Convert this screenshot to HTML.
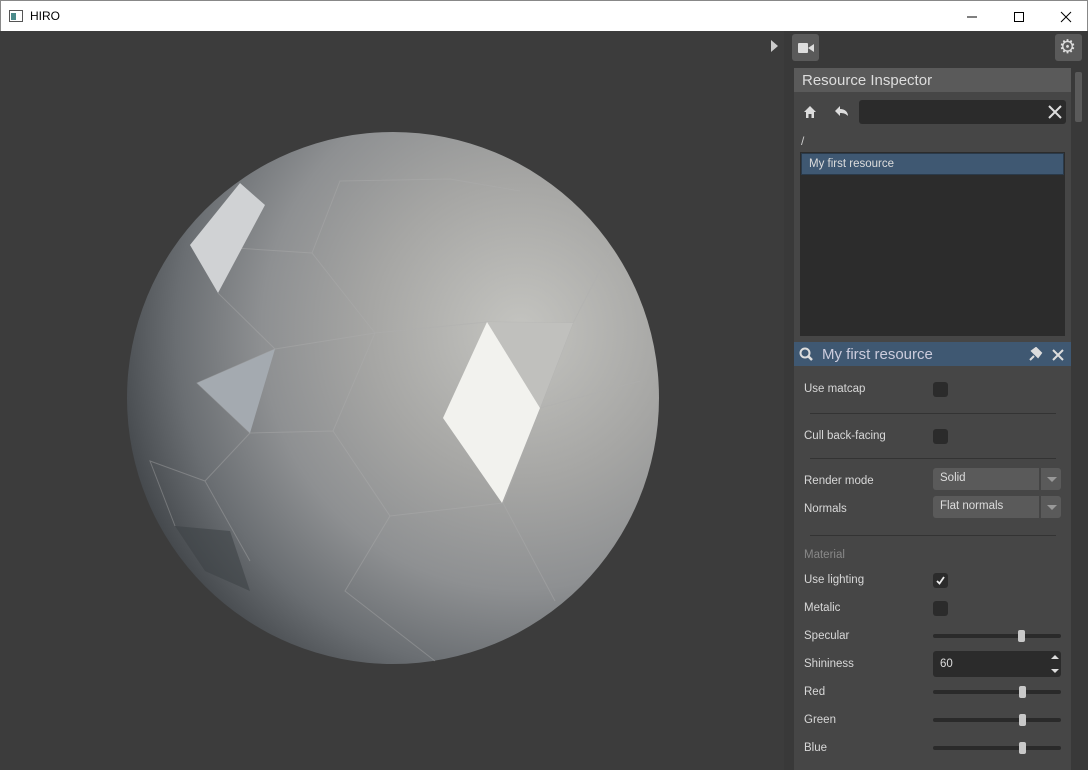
<!DOCTYPE html>
<html><head><style>
*{margin:0;padding:0;box-sizing:border-box}
body{width:1088px;height:770px;overflow:hidden;background:#3c3c3c;font-family:"Liberation Sans",sans-serif;position:relative}
.tb{position:absolute;left:0;top:0;width:1088px;height:31px;background:#fff;border:1px solid #888;border-bottom:none}
.tb span{position:absolute;left:29px;top:8px;font-size:12px;color:#000}
.p{position:absolute}
.lbl{position:absolute;left:804px;font-size:11.5px;color:#d8d8d8}
.cb{position:absolute;left:933px;width:15px;height:15px;background:#2b2b2b;border-radius:3px}
.sl{position:absolute;left:933px;width:128px;height:4px;background:#2a2a2a;border-radius:2px}
.th{position:absolute;width:7px;height:12px;background:#c8c8c8;border-radius:2px;top:-4px}
.dd{position:absolute;left:933px;width:128px;height:22px;background:#5a5a5a;border-radius:3px;font-size:11.5px;color:#ddd;padding:4px 7px}
.dd i{position:absolute;right:0;top:0;width:22px;height:22px;border-left:2px solid #454545}
.dd i:after{content:"";position:absolute;left:6px;top:9px;border:5px solid transparent;border-top:5px solid #999}
.sep{position:absolute;left:810px;width:246px;height:1px;background:#333}
</style></head><body>
<div class="tb"><svg class="p" style="left:8px;top:9px" width="14" height="12"><rect x="0.5" y="0.5" width="13" height="11" fill="#fff" stroke="#555"/><rect x="2" y="3" width="5" height="7" fill="#4a8a8a"/></svg><span>HIRO</span>
<svg class="p" style="left:966px;top:10px" width="110" height="12"><line x1="0" y1="6" x2="10" y2="6" stroke="#000"/><rect x="47.5" y="1.5" width="9" height="9" fill="none" stroke="#000"/><path d="M94 1L104 11M104 1L94 11" stroke="#000"/></svg></div>

<svg class="p" style="left:0;top:31px" width="784" height="739">
<defs><radialGradient id="g" gradientUnits="userSpaceOnUse" cx="520" cy="300" r="430"><stop offset="0" stop-color="#c4c4c0"/><stop offset="0.35" stop-color="#a6a6a4"/><stop offset="0.6" stop-color="#8e9092"/><stop offset="0.8" stop-color="#6a6e72"/><stop offset="1" stop-color="#3a3e42"/></radialGradient></defs>
<ellipse cx="393" cy="367" rx="266" ry="266" fill="url(#g)"/>
<g fill="none" stroke="#b0b0ae" stroke-width="1" opacity="0.4">
<path d="M190 214L312 222L375 302L487 291L573 292L610 220M312 222L340 150L450 148L520 160M375 302L333 400L390 485L503 472L540 377L573 292M333 400L250 402L197 352L275 318L375 302M250 402L205 450L250 530M390 485L345 560L435 630M503 472L555 570M540 377L640 350M275 318L218 262M205 450L150 430L175 495"/>
</g>
<polygon points="487,291 573,292 540,377" fill="#c0c0bd"/>
<polygon points="487,291 540,377 502,472 443,387" fill="#f2f2ee"/>
<polygon points="190,214 240,152 265,174 218,262" fill="#d0d2d4"/>
<polygon points="197,352 275,318 250,402" fill="#a4aab0"/>
<polygon points="175,495 230,500 250,560 205,540" fill="#3e4246" opacity="0.6"/>
</svg>

<div class="p" style="left:784px;top:31px;width:304px;height:739px;background:#393939"></div>
<svg class="p" style="left:770px;top:40px" width="10" height="12"><path d="M1 0L8 6L1 12Z" fill="#ccc"/></svg>
<div class="p" style="left:792px;top:34px;width:27px;height:27px;background:#5a5a5a;border-radius:3px"></div>
<svg class="p" style="left:798px;top:43px" width="16" height="10"><rect x="0" y="0" width="10" height="10" rx="1" fill="#ddd"/><path d="M10 5L16 1V9Z" fill="#ddd"/></svg>
<div class="p" style="left:1055px;top:34px;width:27px;height:27px;background:#5a5a5a;border-radius:3px"></div>
<div class="p" style="left:1059px;top:36px;font-size:19px;color:#ddd;font-family:'DejaVu Sans'">⚙</div>
<div class="p" style="left:1075px;top:72px;width:7px;height:50px;background:#5a5a5a;border-radius:2px"></div>

<div class="p" style="left:794px;top:68px;width:277px;height:24px;background:#5a5a5a;color:#ddd;font-size:15px;padding:4px 8px">Resource Inspector</div>
<div class="p" style="left:794px;top:92px;width:277px;height:250px;background:#464646"></div>
<svg class="p" style="left:803px;top:104px" width="46" height="16"><path d="M1 8L7 2L13 8H11V14H8.5V10H5.5V14H3V8Z" fill="#ddd"/><path d="M32 7L37 2V5C42 5 45 8 45 12C43 10 41 9 37 9V12Z" fill="#ddd"/></svg>
<div class="p" style="left:859px;top:100px;width:207px;height:24px;background:#2b2b2b;border-radius:3px"></div>
<svg class="p" style="left:1048px;top:105px" width="14" height="14"><path d="M1 1L13 13M13 1L1 13" stroke="#ddd" stroke-width="2"/></svg>
<div class="p" style="left:801px;top:134px;font-size:12px;color:#ccc">/</div>
<div class="p" style="left:800px;top:152px;width:265px;height:184px;background:#2c2c2c"></div>
<div class="p" style="left:801px;top:153px;width:263px;height:22px;background:#3f5872;border:1px solid #2a3a4a;color:#ddd;font-size:11.5px;padding:4px 7px">My first resource</div>

<div class="p" style="left:794px;top:342px;width:277px;height:24px;background:#3f5872;color:#ccd;font-size:15px;padding:4px 28px">My first resource</div>
<svg class="p" style="left:798px;top:347px" width="270" height="16"><circle cx="7" cy="6" r="4.5" fill="none" stroke="#ddd" stroke-width="2"/><path d="M10 9L14 13" stroke="#ddd" stroke-width="2.5"/><path d="M232 13L236 9M234 4L240 10L243 6L238 1Z" stroke="#ddd" stroke-width="2" fill="#ddd"/><path d="M255 3L265 13M265 3L255 13" stroke="#ddd" stroke-width="2"/></svg>
<div class="p" style="left:794px;top:366px;width:277px;height:404px;background:#464646"></div>

<div class="lbl" style="top:383px">Use matcap</div><div class="cb" style="top:382px"></div>
<div class="sep" style="top:413px"></div>
<div class="lbl" style="top:430px">Cull back-facing</div><div class="cb" style="top:429px"></div>
<div class="sep" style="top:458px"></div>
<div class="lbl" style="top:475px">Render mode</div><div class="dd" style="top:468px">Solid<i></i></div>
<div class="lbl" style="top:503px">Normals</div><div class="dd" style="top:496px">Flat normals<i></i></div>
<div class="sep" style="top:535px"></div>
<div class="lbl" style="top:549px;color:#888">Material</div>
<div class="lbl" style="top:574px">Use lighting</div><div class="cb" style="top:573px"><svg width="15" height="15"><path d="M4 8L6.5 10.5L11 4" stroke="#eee" stroke-width="1.8" fill="none"/></svg></div>
<div class="lbl" style="top:602px">Metalic</div><div class="cb" style="top:601px"></div>
<div class="lbl" style="top:630px">Specular</div><div class="sl" style="top:634px"><div class="th" style="left:85px"></div></div>
<div class="lbl" style="top:658px">Shininess</div>
<div class="p" style="left:933px;top:651px;width:128px;height:26px;background:#2b2b2b;border-radius:3px;color:#ddd;font-size:11.5px;padding:7px 7px">60</div>
<svg class="p" style="left:1050px;top:654px" width="10" height="20"><path d="M1 5L5 1L9 5Z M1 15L9 15L5 19Z" fill="#ddd"/></svg>
<div class="lbl" style="top:686px">Red</div><div class="sl" style="top:690px"><div class="th" style="left:86px"></div></div>
<div class="lbl" style="top:714px">Green</div><div class="sl" style="top:718px"><div class="th" style="left:86px"></div></div>
<div class="lbl" style="top:742px">Blue</div><div class="sl" style="top:746px"><div class="th" style="left:86px"></div></div>
</body></html>
